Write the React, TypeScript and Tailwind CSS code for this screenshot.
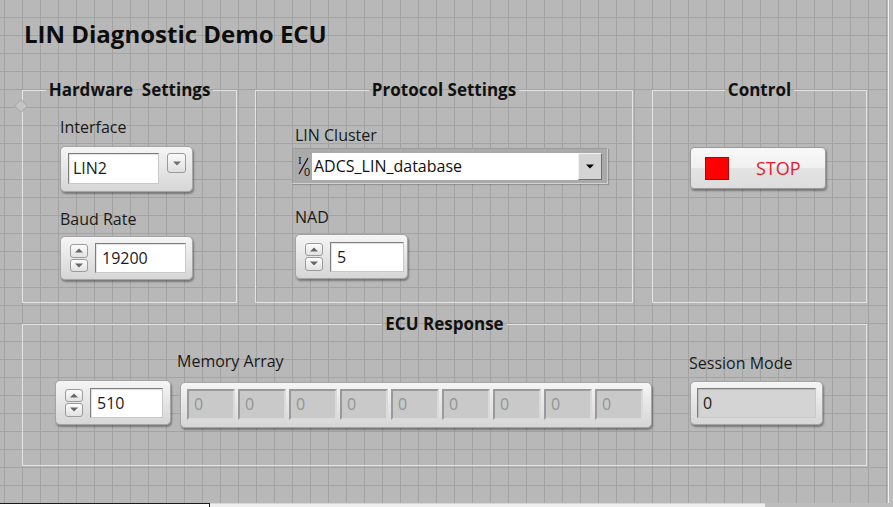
import React from "react";

function Arrow({ up, fill = "#666" }: { up: boolean; fill?: string }) {
  return (
    <svg width="8" height="5" viewBox="0 0 8 5">
      <path d={up ? "M0 4.5L4 0.5L8 4.5Z" : "M0 0.5L4 4.5L8 0.5Z"} fill={fill} />
    </svg>
  );
}

function Spin() {
  return (
    <div className="flex h-[28px] w-[18px] flex-col gap-[1px]">
      <div className="flex flex-1 items-center justify-center rounded-[3px] border border-[#9c9c9c] bg-gradient-to-b from-[#fcfcfc] to-[#e2e2e2]">
        <Arrow up />
      </div>
      <div className="flex flex-1 items-center justify-center rounded-[3px] border border-[#9c9c9c] bg-gradient-to-b from-[#fcfcfc] to-[#e2e2e2]">
        <Arrow up={false} />
      </div>
    </div>
  );
}

const frame =
  "rounded-[5px] border border-[#a5a5a5] bg-gradient-to-b from-[#f5f5f5] to-[#d6d6d6] shadow-[1px_2px_2px_rgba(0,0,0,0.35)]";
const field =
  "border border-[#7d7d7d] border-r-[#c9c9c9] border-b-[#c9c9c9] text-[16px] leading-[28px] text-[#1a1a1a] shadow-[inset_1px_1px_1px_rgba(0,0,0,0.12)]";

function Numeric({ value, size, box }: { value: string; size: string; box: string }) {
  return (
    <div className={`flex items-center pl-[9px] ${frame} ${size}`}>
      <Spin />
      <div className={`ml-[7px] h-[30px] bg-white pl-[6px] ${field} ${box}`}>{value}</div>
    </div>
  );
}

function Label({ children, className = "" }: { children: React.ReactNode; className?: string }) {
  return <div className={`text-[16px] leading-[20px] text-[#1a1a1a] ${className}`}>{children}</div>;
}

function Group({
  title,
  className,
  children,
}: {
  title: string;
  className: string;
  children?: React.ReactNode;
}) {
  return (
    <fieldset className={`relative border border-[#e3e3e3] p-0 ${className}`}>
      <legend className="mx-auto px-[3px] text-[17px] leading-[24px] font-bold whitespace-pre text-[#111]">{title}</legend>
      {children}
    </fieldset>
  );
}

function IoIcon() {
  return (
    <svg width="15" height="24" viewBox="0 0 15 24">
      <text x="1" y="10" fontFamily="Liberation Serif, serif" fontSize="11" fill="#111">
        I
      </text>
      <line x1="2" y1="20" x2="11" y2="4" stroke="#111" strokeWidth="1.2" />
      <text x="7" y="22" fontFamily="Liberation Sans, sans-serif" fontSize="11" fill="#111">
        0
      </text>
    </svg>
  );
}

export default function App() {
  const cells = Array.from({ length: 9 });
  return (
    <div className="relative flex h-[507px] w-[893px] flex-col overflow-hidden bg-[#b9b9b9] font-['Open_Sans',sans-serif]">
      <div className="flex h-[503px]">
        <div className="h-full w-[889px] border-r border-[#f2f2f2] bg-[#b8b8b8] bg-[linear-gradient(to_right,#a3a3a3_1px,transparent_1px),linear-gradient(to_bottom,#a3a3a3_1px,transparent_1px)] bg-[size:18px_18px] bg-[position:4px_17px] pt-[22px]">
          <h1 className="ml-[24px] text-[24px] leading-[24px] font-bold text-[#0d0d0d]">LIN Diagnostic Demo ECU</h1>

          <div className="mt-[32px] ml-[22px] flex">
            <Group title="Hardware  Settings" className="h-[225px] w-[215px]">
              <div className="pointer-events-none absolute -top-[1px] -left-[7px] h-[10px] w-[10px] rotate-45 border border-[#a9a9a9] bg-[#c4c4c4]" />
              <div className="mt-[15px] ml-[37px] flex flex-col items-start">
                <Label>Interface</Label>
                <div className={`mt-[9px] flex h-[46px] w-[133px] items-start pt-[6px] pl-[7px] ${frame}`}>
                  <div className={`h-[31px] w-[91px] bg-white pl-[4px] leading-[29px] ${field}`}>LIN2</div>
                  <div className="ml-[8px] flex h-[20px] w-[19px] items-center justify-center rounded-[3px] border border-[#9a9a9a] bg-gradient-to-b from-[#fbfbfb] to-[#dedede]">
                    <Arrow up={false} fill="#707070" />
                  </div>
                </div>
                <Label className="mt-[17px]">Baud Rate</Label>
                <div className="mt-[7px]">
                  <Numeric value="19200" size="h-[44px] w-[133px]" box="w-[91px]" />
                </div>
              </div>
            </Group>

            <Group title="Protocol Settings" className="ml-[18px] h-[225px] w-[378px]">
              <div className="mt-[23px] ml-[36px] flex flex-col items-start">
                <Label className="ml-[3px]">LIN Cluster</Label>
                <div className="mt-[3px] flex h-[36px] w-[316px] items-center border border-[#9b9b9b] border-r-[#cdcdcd] border-b-[#d2d2d2] bg-[#aaaaaa] pl-[4px] shadow-[1px_1px_1px_rgba(0,0,0,0.2)]">
                  <IoIcon />
                  <div className="h-[27px] w-[266px] bg-white pl-[2px] text-[16px] leading-[27px] text-[#111]">
                    ADCS_LIN_database
                  </div>
                  <div className="flex h-[27px] w-[24px] items-center justify-center border border-[#f2f2f2] border-r-[#6f6f6f] border-b-[#6f6f6f] bg-[#d4d4d4]">
                    <Arrow up={false} fill="#000" />
                  </div>
                </div>
                <Label className="mt-[23px] ml-[3px]">NAD</Label>
                <div className="mt-[7px] ml-[3px]">
                  <Numeric value="5" size="h-[45px] w-[113px]" box="w-[74px]" />
                </div>
              </div>
            </Group>

            <Group title="Control" className="ml-[19px] h-[225px] w-[215px]">
              <div className="mt-[45px] ml-[37px] flex h-[42px] w-[136px] items-center rounded-[4px] border border-[#9a9a9a] bg-[linear-gradient(to_bottom,#f8f8f8_0%,#f0f0f0_50%,#e3e3e3_50%,#dddddd_100%)] pl-[14px] shadow-[1px_2px_2px_rgba(0,0,0,0.35)]">
                <div className="h-[23px] w-[24px] border border-[#b40000] bg-[#ff0000]" />
                <span className="ml-[27px] text-[18px] leading-[20px] text-[#e8192c]">STOP</span>
              </div>
            </Group>
          </div>

          <Group title="ECU Response" className="mt-[9px] ml-[22px] h-[154px] w-[845px]">
            <div className="ml-[32px] flex items-start">
              <div className="mt-[44px]">
                <Numeric value="510" size="h-[45px] w-[116px]" box="w-[73px]" />
              </div>
              <div className="ml-[6px] flex flex-col items-start">
                <Label className="mt-[15px]">Memory Array</Label>
                <div className={`mt-[11px] ml-[3px] flex h-[46px] w-[472px] items-start gap-[3px] pt-[6px] pl-[6px] ${frame}`}>
                  {cells.map((_, i) => (
                    <div
                      key={i}
                      className="h-[31px] w-[48px] border-2 border-[#9a9a9a] border-r-[#dadada] border-b-[#dadada] bg-[#c9c9c9] pl-[5px] text-[16px] leading-[27px] text-[#949494]"
                    >
                      0
                    </div>
                  ))}
                </div>
              </div>
              <div className="ml-[37px] flex flex-col items-start">
                <Label className="mt-[17px]">Session Mode</Label>
                <div className={`mt-[8px] ml-[1px] flex h-[44px] w-[133px] items-center pl-[6px] ${frame}`}>
                  <div className={`h-[30px] w-[119px] bg-[#d4d4d4] pl-[5px] ${field}`}>0</div>
                </div>
              </div>
            </div>
          </Group>
        </div>
        <div className="flex-1 bg-[#bdbdbd]" />
      </div>
      <div className="flex h-[4px]">
        <div className="w-[210px] border-t border-r border-[#1a1a1a] bg-white" />
        <div className="w-[555px] border-t border-[#d8d8d8] bg-[#efefef]" />
        <div className="flex-1 bg-[#bcbcbc]" />
      </div>
    </div>
  );
}
